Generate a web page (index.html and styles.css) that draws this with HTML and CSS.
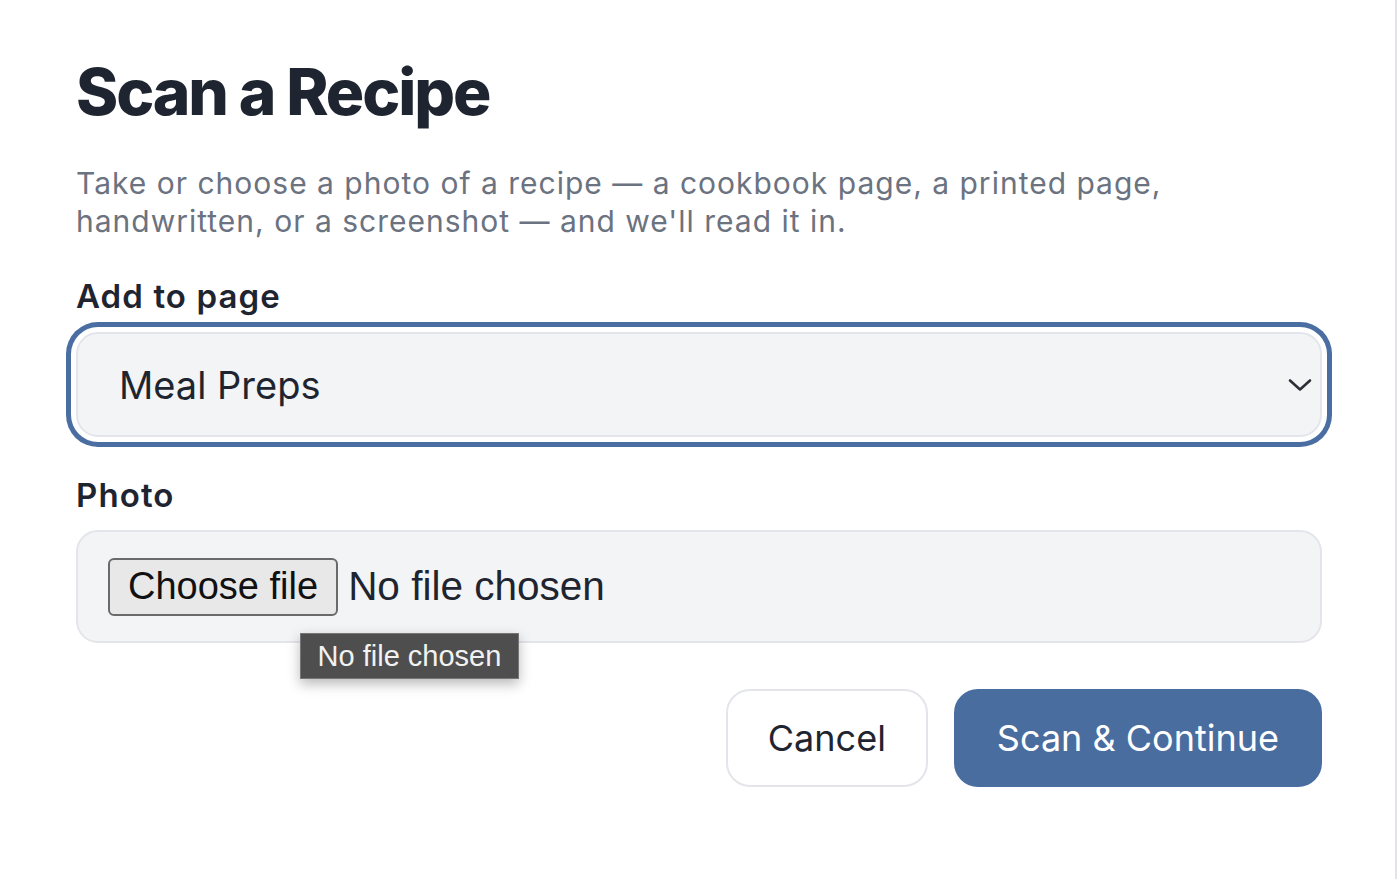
FILE: index.html
```html
<!DOCTYPE html>
<html lang="en">
<head>
<meta charset="utf-8">
<title>Scan a Recipe</title>
<link rel="stylesheet" href="styles.css">
</head>
<body>
<div class="page">
  <div class="dialog">
    <h1 class="title">Scan a Recipe</h1>
    <p class="desc">Take or choose a photo of a recipe — a cookbook page, a printed page, handwritten, or a screenshot — and we'll read it in.</p>

    <div class="field">
      <label class="label">Add to page</label>
      <div class="select" role="combobox" tabindex="0">
        <span class="select-value">Meal Preps</span>
        <svg class="chevron" width="24" height="14" viewBox="0 0 24 14" aria-hidden="true">
          <path d="M2 2.5 L12 11.5 L22 2.5" fill="none" stroke="#2b2f36" stroke-width="2.6" stroke-linecap="round" stroke-linejoin="round"/>
        </svg>
      </div>
    </div>

    <div class="field field-photo">
      <label class="label">Photo</label>
      <div class="file">
        <span class="file-btn">Choose file</span>
        <span class="file-name">No file chosen</span>
        <span class="tooltip">No file chosen</span>
      </div>
    </div>

    <div class="actions">
      <button class="btn btn-cancel" type="button">Cancel</button>
      <button class="btn btn-primary" type="button">Scan &amp; Continue</button>
    </div>
  </div>
</div>
</body>
</html>
```

FILE: styles.css
```css
html, body {
  margin: 0;
  padding: 0;
  background: #ffffff;
}

body {
  font-family: "Inter", "Noto Sans", sans-serif;
  color: #1f2937;
}

.page {
  width: 1397px;
  min-height: 879px;
  box-sizing: border-box;
  border-right: 2px solid #e3e3eb;
}

.dialog {
  width: 1246px;
  padding: 54px 0 0 76px;
  display: flex;
  flex-direction: column;
}

.title {
  margin: 0;
  font-size: 64px;
  line-height: 76px;
  font-weight: 800;
  color: #1f2530;
  letter-spacing: -2.1px;
}

.desc {
  margin: 34px 0 0;
  font-size: 30px;
  line-height: 38px;
  color: #6b7280;
  font-weight: 400;
  letter-spacing: 1px;
}

.field {
  display: flex;
  flex-direction: column;
  margin-top: 36px;
}

.field-photo {
  margin-top: 38px;
}

.label {
  font-size: 33px;
  line-height: 40px;
  font-weight: 600;
  color: #1f2530;
  letter-spacing: 1.1px;
  margin-bottom: 16px;
}

.field-photo .label {
  margin-bottom: 15px;
}

.select {
  height: 105px;
  box-sizing: border-box;
  border: 2px solid #e3e5ea;
  border-radius: 22px;
  background: #f3f4f6;
  display: flex;
  align-items: center;
  padding: 0 8px 0 41px;
  box-shadow: 0 0 0 5px #ffffff, 0 0 0 10px #4a6ea2;
  outline: none;
}

.select-value {
  font-size: 38px;
  color: #1f2530;
  flex: 1;
}

.chevron {
  display: block;
  width: 24px;
  height: 14px;
}

.file {
  position: relative;
  height: 113px;
  box-sizing: border-box;
  border: 2px solid #e3e5ea;
  border-radius: 22px;
  background: #f3f4f6;
  display: flex;
  align-items: center;
  gap: 10px;
  padding: 0 30px;
  font-family: "Liberation Sans", Arial, sans-serif;
}

.file-btn {
  height: 58px;
  box-sizing: border-box;
  display: flex;
  align-items: center;
  padding: 0 18px;
  background: #e8e8e8;
  border: 2px solid #6a6a6a;
  border-radius: 6px;
  font-size: 38px;
  color: #111111;
}

.file-name {
  font-size: 40.5px;
  color: #1f2530;
}

.tooltip {
  position: absolute;
  left: 222px;
  top: 101px;
  width: 219px;
  height: 46px;
  box-sizing: border-box;
  background: #4e4e4e;
  border: 1px solid #767676;
  color: #f2f2f2;
  font-size: 29px;
  display: flex;
  align-items: center;
  justify-content: center;
  box-shadow: 0 5px 12px rgba(0, 0, 0, 0.28);
}

.actions {
  display: flex;
  justify-content: flex-end;
  gap: 26px;
  margin-top: 46px;
}

.btn {
  height: 98px;
  box-sizing: border-box;
  padding: 0 41px;
  border-radius: 24px;
  font-family: "Inter", "Noto Sans", sans-serif;
  font-size: 36px;
  font-weight: 400;
  cursor: pointer;
}

.btn-cancel {
  background: #ffffff;
  border: 2px solid #e3e5ea;
  color: #1f2530;
  padding: 0 40px;
}

.btn-primary {
  background: #4a6da0;
  border: 2px solid #4a6da0;
  color: #ffffff;
}
```
